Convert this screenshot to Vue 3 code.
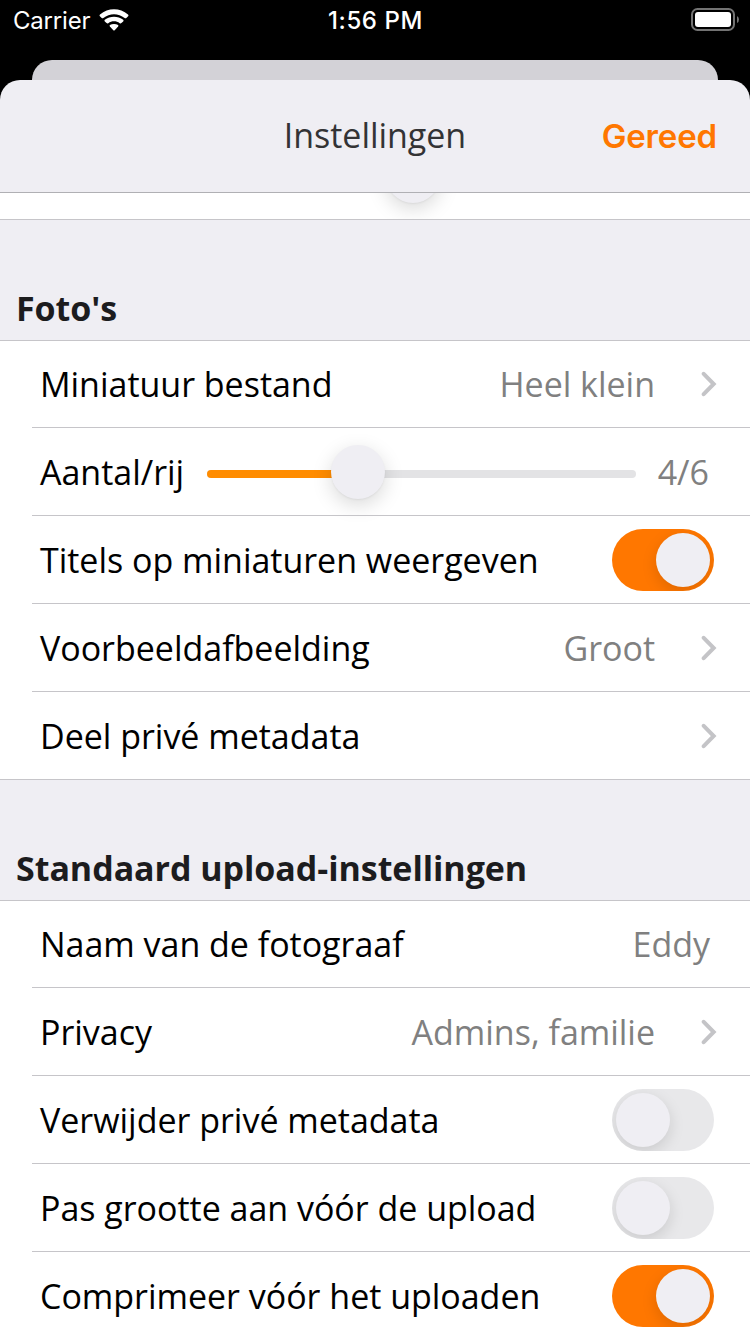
<script setup>
const sections = [
  {
    title: "Foto's",
    rows: [
      { label: 'Miniatuur bestand', value: 'Heel klein', chevron: true },
      { label: 'Aantal/rij', value: '4/6', slider: 35.2 },
      { label: 'Titels op miniaturen weergeven', toggle: 'on' },
      { label: 'Voorbeeldafbeelding', value: 'Groot', chevron: true },
      { label: 'Deel privé metadata', chevron: true },
    ],
  },
  {
    title: 'Standaard upload-instellingen',
    rows: [
      { label: 'Naam van de fotograaf', value: 'Eddy' },
      { label: 'Privacy', value: 'Admins, familie', chevron: true },
      { label: 'Verwijder privé metadata', toggle: 'off' },
      { label: 'Pas grootte aan vóór de upload', toggle: 'off' },
      { label: 'Comprimeer vóór het uploaden', toggle: 'on' },
    ],
  },
]
</script>

<template>
  <div class="screen">
    <div class="status">
      <div class="carrier">
        <span>Carrier</span>
        <svg class="wifi" width="30" height="22" viewBox="0 0 30 22">
          <path d="M1 5.4 C9 -1.6 21 -1.6 29 5.4 Q29.9 6.3 29.1 7.2 L27.3 9 Q26.5 9.7 25.6 9 C19.5 3.9 10.5 3.9 4.4 9 Q3.5 9.7 2.7 9 L0.9 7.2 Q0.1 6.3 1 5.4Z" />
          <path d="M5.8 10.7 C11 6.6 19 6.6 24.2 10.7 Q25 11.5 24.2 12.4 L22.4 14.1 Q21.6 14.8 20.7 14.2 C17.4 11.7 12.6 11.7 9.3 14.2 Q8.4 14.8 7.6 14.1 L5.8 12.4 Q5 11.5 5.8 10.7Z" />
          <path d="M10.9 16.1 C13.2 14.5 16.8 14.5 19.1 16.1 Q19.7 16.8 19.1 17.5 L15.7 21.2 Q15 21.9 14.3 21.2 L10.9 17.5 Q10.3 16.8 10.9 16.1Z" />
        </svg>
      </div>
      <span class="time">1:56 PM</span>
      <svg class="battery" width="49" height="24" viewBox="0 0 49 24">
        <rect x="1" y="1" width="42" height="21" rx="5.5" fill="none" stroke="#737373" stroke-width="2" />
        <rect x="4" y="4" width="36" height="15" rx="3" fill="#fff" />
        <path d="M46 8 Q48 9 48 11.5 Q48 14 46 15Z" fill="#737373" />
      </svg>
    </div>
    <div class="backsheet"></div>
    <div class="sheet">
      <header class="nav">
        <h1>Instellingen</h1>
        <span class="done">Gereed</span>
      </header>
      <div class="sliver"><div class="knob"></div></div>
      <section v-for="s in sections" :key="s.title">
        <h2>{{ s.title }}</h2>
        <div class="group">
          <div v-for="r in s.rows" :key="r.label" class="row">
            <span class="label">{{ r.label }}</span>
            <div v-if="r.slider" class="slider">
              <div class="fill" :style="{ width: r.slider + '%' }"></div>
              <div class="knob" :style="{ left: r.slider + '%' }"></div>
            </div>
            <span v-if="r.value" class="value" :class="{ edge: !r.chevron, count: r.slider }">{{ r.value }}</span>
            <svg v-if="r.chevron" class="chevron" width="16" height="26" viewBox="0 0 16 26">
              <path d="M2.7 2.8 L12.7 13 L2.7 23.2" />
            </svg>
            <div v-if="r.toggle" class="toggle" :class="r.toggle"><i></i></div>
          </div>
        </div>
      </section>
    </div>
  </div>
</template>

<style>
body { margin: 0; background: #000; }
</style>

<style scoped>
.screen {
  width: 750px;
  height: 1334px;
  overflow: hidden;
  background: #000;
  display: flex;
  flex-direction: column;
  font-family: "Open Sans", sans-serif;
}
.status {
  height: 60px;
  flex: none;
  display: grid;
  grid-template-columns: 1fr auto 1fr;
  align-items: start;
  box-sizing: border-box;
  padding: 8px 10px 0 13px;
  color: #fff;
  font: 400 24px/26px Inter, sans-serif;
}
.carrier { display: flex; gap: 9px; letter-spacing: -0.2px; }
.wifi { margin-top: 1px; fill: #fff; }
.time { font-weight: 500; font-size: 24px; letter-spacing: 0.6px; margin-right: 2px; }
.battery { justify-self: end; }
.backsheet {
  flex: none;
  height: 20px;
  margin: 0 32px;
  border-radius: 20px 20px 0 0;
  background: #d3d2d7;
}
.sheet {
  flex: 1;
  min-height: 0;
  overflow: hidden;
  background: #efeef3;
  border-radius: 20px 20px 0 0;
}
.nav {
  height: 113px;
  box-sizing: border-box;
  border-bottom: 1px solid #b0b0b4;
  display: grid;
  grid-template-columns: 1fr auto 1fr;
  align-items: center;
  padding: 0 33px;
}
h1 {
  grid-column: 2;
  margin: 0 0 2px;
  font-size: 34px;
  line-height: 46px;
  font-weight: 400;
  letter-spacing: -0.03px;
  color: #333335;
}
.done {
  justify-self: end;
  font: 600 33px/46px Inter, sans-serif;
  letter-spacing: -0.15px;
  color: #ff7700;
}
.sliver {
  height: 27px;
  box-sizing: border-box;
  background: #fff;
  border-bottom: 1px solid #c6c5c9;
  position: relative;
  overflow: hidden;
}
.knob {
  position: absolute;
  width: 54px;
  height: 54px;
  border-radius: 50%;
  background: #efeef3;
  box-shadow: 0 1px 2px rgba(0, 0, 0, 0.05), 0 6px 20px rgba(0, 0, 0, 0.15);
}
.sliver .knob { left: 386px; top: -44px; }
h2 {
  margin: 0;
  height: 120px;
  box-sizing: border-box;
  padding: 65px 16px 0;
  font-size: 34px;
  line-height: 46px;
  font-weight: 700;
  letter-spacing: -0.05px;
  color: #1c1c1e;
}
.group {
  background: #fff;
  box-shadow: inset 0 1px #c6c5c9;
}
.row {
  height: 88px;
  box-sizing: border-box;
  display: flex;
  align-items: center;
  padding: 0 33px 0 40px;
  font-size: 34px;
  line-height: 46px;
  letter-spacing: -0.02px;
  color: #000;
  position: relative;
}
.row::after {
  content: "";
  position: absolute;
  left: 32px;
  right: 0;
  bottom: 0;
  height: 1px;
  background: #c6c5c9;
}
.row:last-child::after { left: 0; }
.label { white-space: nowrap; margin-right: auto; }
.value { color: #808080; white-space: nowrap; }
.value.edge { margin-right: 7px; }
.value.count { margin-right: 8px; }
.slider {
  position: relative;
  width: 429px;
  height: 8px;
  margin: 4px 22px 0 0;
  border-radius: 4px;
  background: #e3e3e5;
}
.fill { height: 8px; border-radius: 4px; background: #ff8c00; }
.slider .knob { top: -25px; margin-left: -27px; }
.chevron { margin-left: 46px; fill: none; stroke: #c4c4c7; stroke-width: 4; stroke-linecap: round; stroke-linejoin: miter; }
.toggle {
  width: 102px;
  height: 62px;
  box-sizing: border-box;
  padding: 4px;
  margin-right: 3px;
  border-radius: 31px;
  overflow: hidden;
  display: flex;
  background: #e8e8ea;
}
.toggle.on { background: #ff7700; justify-content: flex-end; }
.toggle i {
  width: 54px;
  height: 54px;
  border-radius: 50%;
  background: #efeef3;
  box-shadow: 0 5px 15px rgba(0, 0, 0, 0.13);
}
</style>
